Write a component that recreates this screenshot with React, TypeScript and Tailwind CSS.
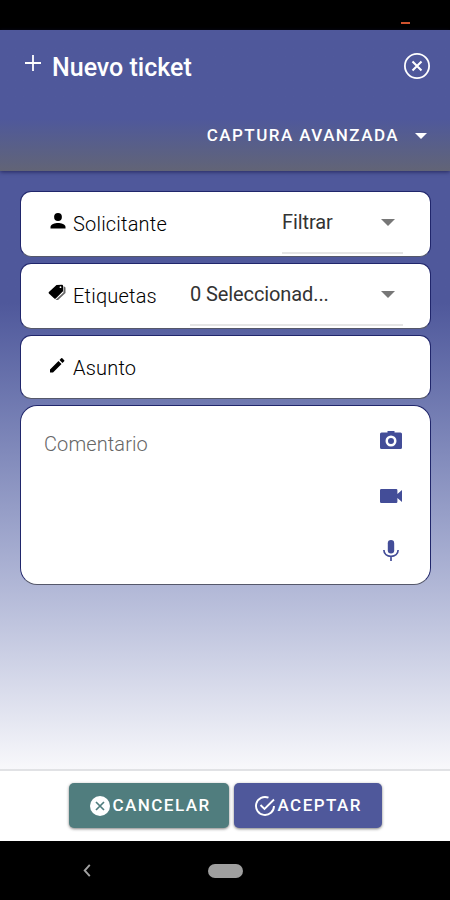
import type { ReactNode } from "react";

function Caret({ className }: { className: string }) {
    return (
        <svg viewBox="0 0 14 7" className={className} fill="currentColor">
            <path d="M0 0h14L7 7z" />
        </svg>
    );
}

function NavigationBar() {
    return (
        <div className="flex h-[59px] items-center bg-black">
            <svg viewBox="0 0 8 14" className="ml-[83px] h-[13px] w-2" fill="none" stroke="#a3a3a3" strokeWidth="2">
                <path d="M7 1L1.5 7L7 13" />
            </svg>
            <div className="ml-[117px] h-3.5 w-[35px] rounded-full bg-[#9f9f9f]" />
        </div>
    );
}

function Header() {
    return (
        <header className="relative h-[141px] bg-linear-to-b from-[#4f589b] from-63% to-[#626476] pt-px text-white shadow-[0_1px_4px_rgba(20,20,70,0.7)]">
            <div className="flex h-[72px] items-center pr-5 pl-[25px]">
                <svg viewBox="0 0 16 16" className="mb-2 size-4" fill="none" stroke="currentColor" strokeWidth="1.8">
                    <path d="M8 0v16M0 8h16" />
                </svg>
                <h1 className="mt-px ml-[11px] text-[25px] leading-8 font-medium whitespace-nowrap">Nuevo ticket</h1>
                <svg viewBox="0 0 26 26" className="mb-0.5 ml-auto size-[26px]" fill="none" stroke="currentColor">
                    <circle cx="13" cy="13" r="12.1" strokeWidth="1.8" />
                    <path d="M8.5 8.5l9 9M17.5 8.5l-9 9" strokeWidth="2.1" />
                </svg>
            </div>
            <div className="flex h-[66px] items-center justify-end pr-[23px]">
                <span className="text-[17px] font-medium tracking-[1.45px] whitespace-nowrap">CAPTURA AVANZADA</span>
                <Caret className="ml-4 h-1.5 w-3" />
            </div>
        </header>
    );
}

function Field({ icon, label, className, children }: { icon: ReactNode; label: string; className: string; children?: ReactNode }) {
    return (
        <div className={`flex overflow-hidden rounded-[11px] border border-[#20266b] border-b-[#55586a] bg-white pl-[27px] ${className}`}>
            <div className="flex h-full items-center">
                {icon}
                <span className="ml-[7px] text-[20px] font-light tracking-[0.2px] text-black">{label}</span>
            </div>
            {children}
        </div>
    );
}

function Select({ value, className }: { value: string; className: string }) {
    return (
        <div className={`mr-[27px] mb-0.5 ml-auto flex items-center border-b-2 border-[#e5e5e5] ${className}`}>
            <span className="text-[20px] tracking-[-0.1px] whitespace-nowrap text-[#333]">{value}</span>
            <Caret className="mr-2 ml-auto h-[7px] w-3.5 text-[#777]" />
        </div>
    );
}

export default function App() {
    return (
        <div className="flex h-[900px] w-[450px] flex-col overflow-hidden bg-black font-[Roboto,sans-serif]">
            {/* Status bar */}
            <div className="flex h-[30px] items-end justify-end pr-10 pb-1.5">
                <div className="h-0.5 w-[9px] bg-[#d0532f]" />
            </div>

            <Header />

            {/* Form */}
            <main className="flex flex-1 flex-col gap-1.5 bg-linear-to-b from-[#4f589b] from-22% to-[#f8f8fb] pt-5 pr-[19px] pl-5">
                <Field
                    label="Solicitante"
                    className="h-[66px]"
                    icon={
                        <svg viewBox="0 0 18 16" className="mb-[7px] h-4 w-[18px]" fill="#000">
                            <circle cx="10" cy="4" r="3.9" />
                            <path d="M2.500 15.500v-1.500c0-2.600 4.500-4 7.500-4s7.500 1.400 7.500 4v1.500z" />
                        </svg>
                    }
                >
                    <Select value="Filtrar" className="w-[121px]" />
                </Field>

                <Field
                    label="Etiquetas"
                    className="h-[66px]"
                    icon={
                        <svg viewBox="0 0 18 17" className="mb-[7px] h-[17px] w-[18px]">
                            <path d="M15.500 2l2 1.500v5.500l-7.500 7h-2.500l8-7.500z" fill="#666" />
                            <path d="M8.500 1L14 .7a1 1 0 0 1 1 1v5.600l-7.300 7.100a1 1 0 0 1-1.400 0L.9 9.400a1 1 0 0 1 0-1.400z" fill="#000" />
                            <circle cx="12.500" cy="3.200" r=".9" fill="#fff" />
                        </svg>
                    }
                >
                    <Select value="0 Seleccionad..." className="w-[213px]" />
                </Field>

                <Field
                    label="Asunto"
                    className="h-16 pt-0.5"
                    icon={
                        <svg viewBox="0 0 18 16" className="mb-1.5 h-4 w-[18px]" fill="#000">
                            <path d="M2 12.500v3h3l8.500-8.500-3-3zM11.500 3l3 3 1.700-1.700a.8.8 0 0 0 0-1.100L14.300 1.300a.8.8 0 0 0-1.100 0z" />
                        </svg>
                    }
                />

                <div className="flex h-[180px] justify-between rounded-[17px] border border-[#20266b] border-b-[#55586a] bg-white pr-7 pl-[23px]">
                    <span className="mt-[23px] text-[20px] font-light tracking-[0.1px] text-[#666]">Comentario</span>
                    <div className="mt-[25px] flex w-[22px] flex-col items-center text-[#434d98]">
                        <svg viewBox="0 0 22 18" className="h-[18px] w-[22px]" fill="currentColor" fillRule="evenodd">
                            <path d="M7.500 0h7v1.500H20.500a1.500 1.500 0 0 1 1.500 1.500V16.500a1.500 1.500 0 0 1-1.500 1.500H1.500a1.500 1.500 0 0 1-1.500-1.500V3a1.500 1.500 0 0 1 1.500-1.500h6zM11 4.500a5.500 5.500 0 1 0 0 11 5.500 5.500 0 0 0 0-11zm0 2.500a3 3 0 1 1 0 6 3 3 0 0 1 0-6z" />
                        </svg>
                        <svg viewBox="0 0 22 14" className="mt-[40px] h-3.5 w-[22px]" fill="currentColor">
                            <path d="M1.200 0h15a1.200 1.200 0 0 1 1.200 1.200V5L22 1v12l-4.600-4v3.800a1.200 1.200 0 0 1-1.200 1.200h-15A1.200 1.200 0 0 1 0 12.800V1.200A1.200 1.200 0 0 1 1.200 0z" />
                        </svg>
                        <svg viewBox="0 0 16 21" className="mt-[37px] h-[21px] w-4" fill="none" stroke="currentColor">
                            <rect x="4.800" y="0" width="6.400" height="13.500" rx="3.200" fill="currentColor" stroke="none" />
                            <path d="M.9 10c0 4 3.200 6.300 7.100 6.300s7.100-2.300 7.100-6.300M8 16v5" strokeWidth="1.700" />
                        </svg>
                    </div>
                </div>
            </main>

            {/* Actions */}
            <footer className="flex h-[72px] justify-center gap-[5px] border-t-2 border-[#e1e2e5] bg-white pt-3 text-[17px] font-medium tracking-[1.45px] text-white">
                <button className="flex h-[45px] w-[160px] items-center rounded-[5px] bg-[#507d7e] pl-[21px] shadow-[0_1px_3px_rgba(0,0,0,0.5)]">
                    <svg viewBox="0 0 20 20" className="mr-[3px] size-5">
                        <circle cx="10" cy="10" r="10" fill="#fff" />
                        <path d="M6 6l8 8M14 6l-8 8" fill="none" stroke="#507d7e" strokeWidth="1.700" />
                    </svg>
                    CANCELAR
                </button>
                <button className="flex h-[45px] w-[148px] items-center rounded-[5px] bg-[#4f589b] pl-[21px] shadow-[0_1px_3px_rgba(0,0,0,0.5)]">
                    <svg viewBox="0 0 20 20" className="mr-[3px] size-5" fill="none" stroke="currentColor" strokeWidth="1.900">
                        <path d="M13.500 1.700A9 9 0 1 0 19 10" />
                        <path d="M5.500 9l4 4L19 3.500" />
                    </svg>
                    ACEPTAR
                </button>
            </footer>

            <NavigationBar />
        </div>
    );
}
